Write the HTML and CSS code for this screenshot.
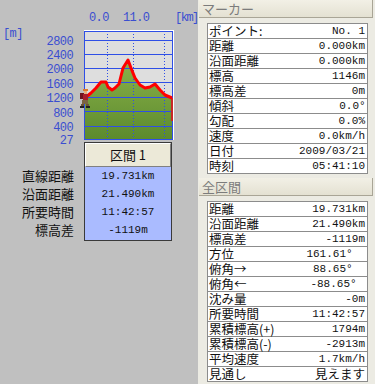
FILE: index.html
```html
<!DOCTYPE html>
<html lang="ja">
<head>
    <meta charset="UTF-8">
    <meta name="viewport" content="width=device-width, initial-scale=1.0">
    <title>Marker</title>
    <link rel="stylesheet" href="styles.css">
</head>
<body>
    <div class="app">
        <div class="left">
            <svg class="chart" width="198" height="142" viewBox="0 0 198 142">
                <defs>
                    <linearGradient id="hill" x1="0" y1="0" x2="0" y2="1">
                        <stop offset="0" stop-color="#8bb24a"/>
                        <stop offset="1" stop-color="#5b8a2d"/>
                    </linearGradient>
                </defs>
                <g class="ax">
                    <text x="3" y="37">[m]</text>
                    <text x="89" y="21">0.0</text>
                    <text x="123" y="21">11.0</text>
                    <text x="175" y="21" class="km">[km]</text>
                    <text x="73" y="45" text-anchor="end">2800</text>
                    <text x="73" y="59" text-anchor="end">2400</text>
                    <text x="73" y="73" text-anchor="end">2000</text>
                    <text x="73" y="88" text-anchor="end">1600</text>
                    <text x="73" y="102" text-anchor="end">1200</text>
                    <text x="73" y="117" text-anchor="end">800</text>
                    <text x="73" y="131" text-anchor="end">400</text>
                    <text x="73" y="144" text-anchor="end">27</text>
                </g>
                <rect x="84" y="31" width="89" height="109" fill="#dedede"/>
                <polygon fill="url(#hill)" points="85,97 86,97 91,93 96,88 101,82 106,82 108,87 112,90 115,88 119,84 123,68 128,60 131,68 135,78 140,85 145,88 150,87 155,84 160,90 165,95 172,98 172,140 85,140"/>
                <g stroke="#2f4fe6" stroke-width="1">
                    <line x1="84" y1="40.5" x2="173" y2="40.5"/>
                    <line x1="84" y1="54.5" x2="173" y2="54.5"/>
                    <line x1="84" y1="68.5" x2="173" y2="68.5"/>
                    <line x1="84" y1="82.5" x2="173" y2="82.5"/>
                    <line x1="84" y1="97.5" x2="173" y2="97.5"/>
                    <line x1="84" y1="111.5" x2="173" y2="111.5"/>
                    <line x1="84" y1="126.5" x2="173" y2="126.5"/>
                </g>
                <g stroke="#2f4fe6" stroke-width="1" stroke-dasharray="1 2">
                    <line x1="107.5" y1="31" x2="107.5" y2="140"/>
                    <line x1="133.5" y1="31" x2="133.5" y2="140"/>
                    <line x1="164.5" y1="31" x2="164.5" y2="140"/>
                </g>
                <rect x="84.5" y="31.5" width="88" height="108" fill="none" stroke="#2f4fe6"/>
                <line x1="84" y1="30.5" x2="174" y2="30.5" stroke="#fff"/>
                <line x1="173.5" y1="30" x2="173.5" y2="140" stroke="#fff"/>
                <line x1="172" y1="98" x2="172" y2="121" stroke="#c82828" stroke-width="2"/>
                <polyline fill="none" stroke="#ff0000" stroke-width="3" stroke-linejoin="round" points="85,97 86,97 91,93 96,88 101,82 106,82 108,87 112,90 115,88 119,84 123,68 128,60 131,68 135,78 140,85 145,88 150,87 155,84 160,90 165,95 172,98"/>
                <g class="hiker">
                    <rect x="83" y="89" width="5" height="2" fill="#e0782e"/>
                    <rect x="84" y="91" width="3" height="3" fill="#e8b07c"/>
                    <rect x="80" y="93" width="4" height="6" fill="#6e1420"/>
                    <rect x="83" y="94" width="5" height="6" fill="#a81e2c"/>
                    <rect x="82" y="100" width="6" height="4" fill="#7a6440"/>
                    <rect x="81" y="104" width="3" height="2" fill="#6a5434"/>
                    <rect x="86" y="104" width="3" height="2" fill="#6a5434"/>
                    <rect x="80" y="106" width="4" height="2" fill="#202020"/>
                    <rect x="86" y="106" width="4" height="2" fill="#202020"/>
                </g>
            </svg>
            <div class="summary">
                <div class="sum-labels">
                    <div>直線距離</div>
                    <div>沿面距離</div>
                    <div>所要時間</div>
                    <div>標高差</div>
                </div>
                <div class="sum-box">
                    <div class="sum-title">区間 1</div>
                    <div class="sum-values">
                        <div>19.731km</div>
                        <div>21.490km</div>
                        <div>11:42:57</div>
                        <div>-1119m</div>
                    </div>
                </div>
            </div>
        </div>

        <div class="right">
            <div class="bar">マーカー</div>
            <div class="table">
                <div class="row"><span class="k">ポイント:</span><span class="v">No. 1</span></div>
                <div class="row"><span class="k">距離</span><span class="v">0.000km</span></div>
                <div class="row"><span class="k">沿面距離</span><span class="v">0.000km</span></div>
                <div class="row"><span class="k">標高</span><span class="v">1146m</span></div>
                <div class="row"><span class="k">標高差</span><span class="v">0m</span></div>
                <div class="row"><span class="k">傾斜</span><span class="v">0.0<span class="deg">°</span></span></div>
                <div class="row"><span class="k">勾配</span><span class="v">0.0%</span></div>
                <div class="row"><span class="k">速度</span><span class="v">0.0km/h</span></div>
                <div class="row"><span class="k">日付</span><span class="v">2009/03/21</span></div>
                <div class="row"><span class="k">時刻</span><span class="v">05:41:10</span></div>
            </div>
            <div class="bar">全区間</div>
            <div class="table">
                <div class="row"><span class="k">距離</span><span class="v">19.731km</span></div>
                <div class="row"><span class="k">沿面距離</span><span class="v">21.490km</span></div>
                <div class="row"><span class="k">標高差</span><span class="v">-1119m</span></div>
                <div class="row"><span class="k">方位</span><span class="v pad">161.61<span class="deg">°</span></span></div>
                <div class="row"><span class="k">俯角→</span><span class="v pad">88.65<span class="deg">°</span></span></div>
                <div class="row"><span class="k">俯角←</span><span class="v pad-s">-88.65<span class="deg">°</span></span></div>
                <div class="row"><span class="k">沈み量</span><span class="v">-0m</span></div>
                <div class="row"><span class="k">所要時間</span><span class="v">11:42:57</span></div>
                <div class="row"><span class="k">累積標高(+)</span><span class="v">1794m</span></div>
                <div class="row"><span class="k">累積標高(-)</span><span class="v">-2913m</span></div>
                <div class="row"><span class="k">平均速度</span><span class="v">1.7km/h</span></div>
                <div class="row"><span class="k">見通し</span><span class="v jp">見えます</span></div>
            </div>
        </div>
    </div>
</body>
</html>
```

FILE: styles.css
```css
body { margin: 0; background: #c0c0c0; font-family: "Noto Sans CJK JP", sans-serif; color: #111; }
.app { display: flex; width: 375px; height: 384px; overflow: hidden; }

.left { width: 198px; flex-shrink: 0; }
.chart { display: block; overflow: visible; }
.ax text { font-family: "Liberation Mono", monospace; font-size: 12px; letter-spacing: -0.6px; fill: #3a4ed0; }
.ax .km { letter-spacing: -1.5px; }

.summary { display: flex; }
.sum-labels { width: 84px; padding-top: 25px; box-sizing: border-box; padding-right: 10px; text-align: right; font-size: 13px; }
.sum-labels div { height: 18px; line-height: 18px; }
.sum-box { width: 88px; border: 1px solid #3a3a3a; box-sizing: border-box; }
.sum-title { height: 24px; line-height: 22px; text-align: center; font-size: 13px; background: #ece9d8; border: 1px solid; border-color: #fff #808080 #808080 #fff; box-sizing: border-box; }
.sum-values { background: #aabbff; padding-bottom: 1px; }
.sum-values div { height: 18px; line-height: 18px; text-align: center; font-family: "Liberation Mono", monospace; font-size: 11px; }

.right { width: 177px; background: #ecebe3; }
.bar { height: 18px; line-height: 18px; margin: 0 2px 0 1px; padding-left: 3px; font-size: 13px; color: #7c7c7c; background: linear-gradient(#f2f0e6, #e4e1d2); border-bottom: 1px solid #a9a596; border-right: 1px solid #a9a596; box-sizing: border-box; }
.table { margin: 4px 7px 4px 9px; background: #fff; border: 1px solid #8c8c8c; border-bottom: none; }
.bar + .table { margin-top: 5px; }
.row { display: flex; justify-content: space-between; align-items: center; height: 15px; border-bottom: 1px solid #8c8c8c; box-sizing: border-box; padding: 0 2px 0 1px; }
.k { font-size: 12.5px; line-height: 14px; }
.v { font-family: "Liberation Mono", "Noto Sans CJK JP", monospace; font-size: 11px; line-height: 14px; }
.v.jp { font-family: "Noto Sans CJK JP", sans-serif; font-size: 12.5px; }
.deg { display: inline-block; width: 6px; text-align: left; }
.v.pad { padding-right: 13px; }
.v.pad-s { padding-right: 9px; }
```
